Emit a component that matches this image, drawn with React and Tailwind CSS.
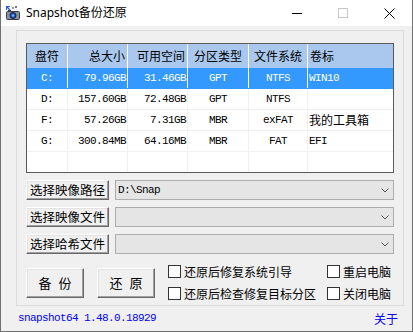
import React from "react";

const rows = [
  { d: "C:", t: "79.96GB", f: "31.46GB", p: "GPT", fs: "NTFS", l: "WIN10", sel: true },
  { d: "D:", t: "157.60GB", f: "72.48GB", p: "GPT", fs: "NTFS", l: "" },
  { d: "F:", t: "57.26GB", f: "7.31GB", p: "MBR", fs: "exFAT", l: "我的工具箱" },
  { d: "G:", t: "300.84MB", f: "64.16MB", p: "MBR", fs: "FAT", l: "EFI" },
];

const mono = "font-['Liberation_Mono',monospace] text-[11px] tracking-[-0.6px]";
const cjk = "font-['Noto_Sans_CJK_SC',sans-serif]";

function Chevron() {
  return (
    <svg width="8" height="5" viewBox="0 0 8 5">
      <polyline points="0.5,0.5 4,4 7.5,0.5" fill="none" stroke="#555" strokeWidth="1" />
    </svg>
  );
}

function Combo({ text }) {
  return (
    <div className="flex-1 h-[20px] bg-[#e5e5e5] border border-[#adadad] flex items-center justify-between pl-[2px] pr-[4px]">
      <span className={`${mono} text-black leading-none`}>{text}</span>
      <Chevron />
    </div>
  );
}

function Btn({ children, cls }) {
  return (
    <div
      className={`${cls} shrink-0 whitespace-pre bg-[#f0f0f0] border border-t-white border-l-white border-r-[#696969] border-b-[#696969] shadow-[inset_-1px_-1px_0_#a0a0a0,inset_1px_1px_0_#e3e3e3] flex items-center justify-center ${cjk} text-black leading-none`}
    >
      {children}
    </div>
  );
}

function Check({ label }) {
  return (
    <div className="flex items-center h-[13px] whitespace-nowrap">
      <div className="w-[13px] h-[13px] shrink-0 border border-[#333] bg-white" />
      <span className={`${cjk} text-[12px] leading-none ml-[3px] text-black`}>{label}</span>
    </div>
  );
}

function AppIcon() {
  return (
    <svg width="16" height="16" viewBox="0 0 16 16">
      <path d="M1 1 L5 1 L5 2 L3 2 L5.5 4.5 L4.5 5.5 L2 3 L2 5 L1 5 Z" fill="#2a5bd7" />
      <rect x="7" y="2" width="2" height="2" fill="#9aa3b5" />
      <rect x="10" y="1" width="2" height="2" fill="#6b7895" />
      <rect x="1.5" y="6.5" width="13" height="8" rx="1" fill="#8a8f99" stroke="#3b3f47" />
      <rect x="3" y="5" width="3" height="2" fill="#3b3f47" />
      <circle cx="8" cy="10.5" r="3" fill="#1d4fbf" stroke="#15233f" />
      <circle cx="8" cy="10.5" r="1.2" fill="#6fb1ff" />
      <rect x="12" y="8" width="1.5" height="1.5" fill="#4ccf4c" />
    </svg>
  );
}

export default function App() {
  return (
    <div className="w-[413px] h-[332px] border-x border-b border-[#707070] bg-[#f0f0f0] flex flex-col overflow-hidden">
      {/* Title bar */}
      <div className="h-[26px] bg-white flex items-center shrink-0">
        <div className="pl-[4px] flex items-center">
          <AppIcon />
        </div>
        <span className="ml-[5px] font-['Noto_Sans','Noto_Sans_CJK_SC',sans-serif] text-[12px] leading-none text-black">
          Snapshot备份还原
        </span>
        <div className="flex-1" />
        <div className="w-[46px] h-[26px] flex items-center justify-center">
          <div className="w-[10px] h-[1px] bg-black" />
        </div>
        <div className="w-[46px] h-[26px] flex items-center justify-center">
          <div className="w-[10px] h-[10px] border border-[#c8c8c8]" />
        </div>
        <div className="w-[46px] h-[26px] flex items-center justify-center">
          <svg width="11" height="11" viewBox="0 0 11 11">
            <path d="M0.5 0.5 L10.5 10.5 M10.5 0.5 L0.5 10.5" stroke="#000" strokeWidth="1" />
          </svg>
        </div>
      </div>

      {/* Group box */}
      <div className="ml-[15px] mt-[4px] w-[388px] h-[276px] border border-[#dcdcdc] px-[9px] pt-[12px] flex flex-col shrink-0">
        {/* Table */}
        <div className="w-[368px] h-[130px] border border-[#5a5a5a] bg-white flex flex-col">
          <div className={`h-[24px] bg-[#aac8ee] flex ${cjk} text-[12px] leading-none text-black`}>
            <div className="w-[41px] border-r border-white flex items-center justify-center">盘符</div>
            <div className="w-[60px] border-r border-white flex items-center justify-end pr-[2px]">总大小</div>
            <div className="w-[60px] border-r border-white flex items-center justify-end pr-[2px]">可用空间</div>
            <div className="w-[61px] border-r border-white flex items-center justify-center">分区类型</div>
            <div className="w-[59px] border-r border-white flex items-center justify-center">文件系统</div>
            <div className="flex-1 flex items-center pl-[2px]">卷标</div>
          </div>
          {rows.map((r) => {
            const line = r.sel ? "border-white" : "border-[#f0f0f0]";
            return (
              <div
                key={r.d}
                className={`h-[21px] flex border-b ${r.sel ? "bg-[#3399ff] text-white border-[#3399ff]" : "bg-white text-black border-[#f0f0f0]"} ${mono} leading-none`}
              >
                <div className={`w-[41px] border-r ${line} flex items-center justify-center`}>{r.d}</div>
                <div className={`w-[60px] border-r ${line} flex items-center justify-end pr-[1px]`}>{r.t}</div>
                <div className={`w-[60px] border-r ${line} flex items-center justify-end pr-[1px]`}>{r.f}</div>
                <div className={`w-[61px] border-r ${line} flex items-center justify-center`}>{r.p}</div>
                <div className={`w-[59px] border-r ${line} flex items-center justify-center`}>{r.fs}</div>
                <div className="flex-1 flex items-center pl-[1px]">
                  {r.l === "我的工具箱" ? (
                    <span className={`${cjk} text-[12px] tracking-normal`}>{r.l}</span>
                  ) : (
                    r.l
                  )}
                </div>
              </div>
            );
          })}
          <div className="flex-1 flex">
            <div className="w-[41px] border-r border-[#f0f0f0]" />
            <div className="w-[60px] border-r border-[#f0f0f0]" />
            <div className="w-[60px] border-r border-[#f0f0f0]" />
            <div className="w-[61px] border-r border-[#f0f0f0]" />
            <div className="w-[59px] border-r border-[#f0f0f0]" />
            <div className="flex-1" />
          </div>
        </div>

        {/* Path rows */}
        <div className="mt-[7px] flex flex-col gap-[7px]">
          <div className="flex items-center gap-[6px]">
            <Btn cls="w-[83px] h-[20px] text-[12.5px]">选择映像路径</Btn>
            <Combo text={"D:\\Snap"} />
          </div>
          <div className="flex items-center gap-[6px]">
            <Btn cls="w-[83px] h-[20px] text-[12.5px]">选择映像文件</Btn>
            <Combo text="" />
          </div>
          <div className="flex items-center gap-[6px]">
            <Btn cls="w-[83px] h-[20px] text-[12.5px]">选择哈希文件</Btn>
            <Combo text="" />
          </div>
        </div>

        {/* Bottom controls */}
        <div className="mt-[11px] flex items-center">
          <Btn cls="w-[58px] h-[30px] text-[13px] tracking-[2px] pl-[2px]">备 份</Btn>
          <Btn cls="ml-[13px] w-[58px] h-[30px] text-[13px] tracking-[2px] pl-[2px]">还 原</Btn>
          <div className="ml-[13px] flex flex-col gap-[9px] w-[159px] shrink-0">
            <Check label="还原后修复系统引导" />
            <Check label="还原后检查修复目标分区" />
          </div>
          <div className="flex flex-col gap-[9px] shrink-0">
            <Check label="重启电脑" />
            <Check label="关闭电脑" />
          </div>
        </div>
      </div>

      {/* Footer */}
      <div className="flex-1 flex items-center justify-between pl-[17px] pr-[14px]">
        <span className={`${mono} text-[#0000ff] leading-none`}>snapshot64 1.48.0.18929</span>
        <span className={`${cjk} text-[12px] text-[#0000ff] leading-none`}>关于</span>
      </div>
    </div>
  );
}
